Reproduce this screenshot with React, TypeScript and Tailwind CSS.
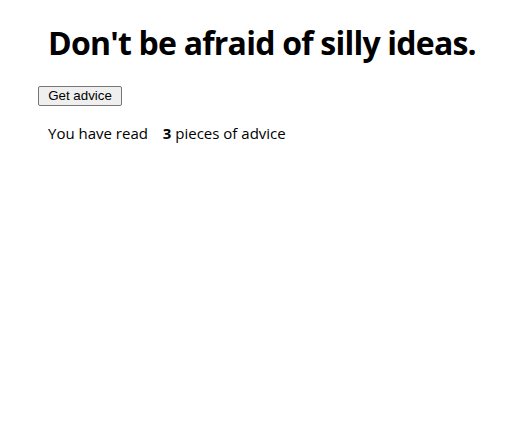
import React from "react";

const App: React.FC = () => {
  return (
    <div className="min-h-[437px] bg-white text-black font-['Open_Sans',sans-serif] pl-[38px] pt-[20px]">
      <h1 className="pl-[10px] text-[32px] font-bold leading-[46px] tracking-[-0.78px]">
        Don't be afraid of silly ideas.
      </h1>
      <button className="mt-[20px] h-[20px] w-[84px] rounded-[2px] border border-[#767676] bg-[#efefef] font-['Liberation_Sans',sans-serif] text-[13.33px] leading-none text-black">
        Get advice
      </button>
      <p className="mt-[17px] pl-[10px] text-[15px] leading-[20px]">
        You have read <b className="ml-[11px] font-bold">3</b> pieces of advice
      </p>
    </div>
  );
};

export default App;
